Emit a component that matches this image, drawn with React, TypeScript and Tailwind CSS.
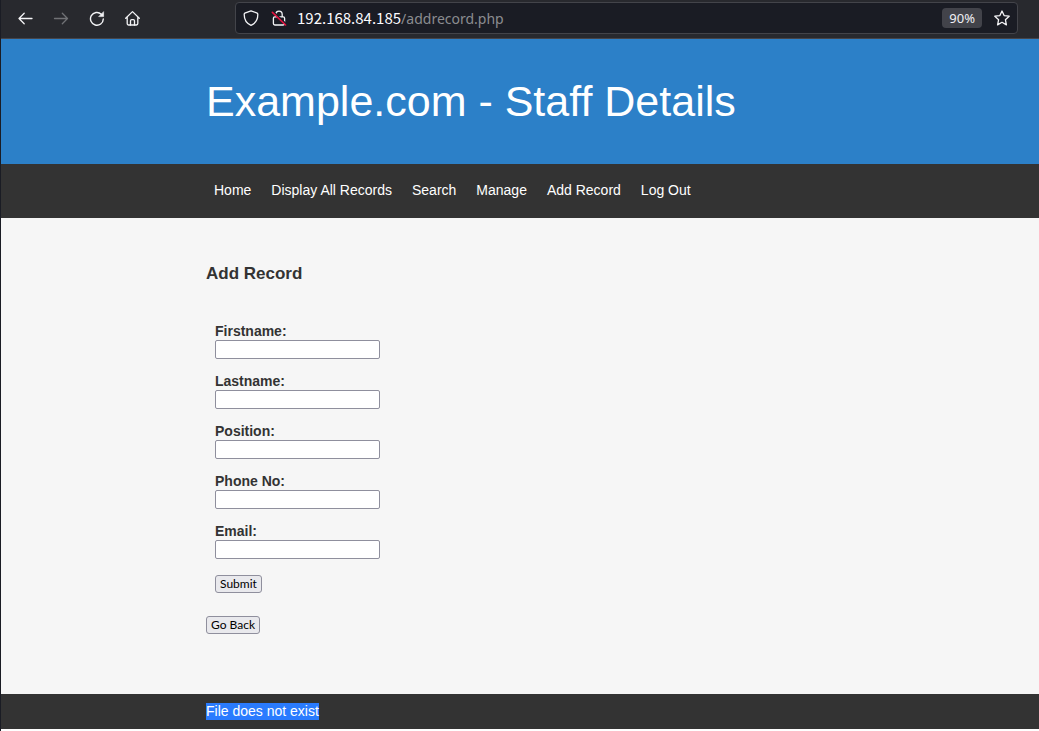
import React from 'react';

interface NavItem {
  label: string;
  href: string;
}

interface Field {
  id: string;
  label: string;
  type: string;
}

const navItems: NavItem[] = [
  { label: 'Home', href: '#index' },
  { label: 'Display All Records', href: '#display' },
  { label: 'Search', href: '#search' },
  { label: 'Manage', href: '#manage' },
  { label: 'Add Record', href: '#addrecord' },
  { label: 'Log Out', href: '#logout' },
];

const fields: Field[] = [
  { id: 'firstname', label: 'Firstname:', type: 'text' },
  { id: 'lastname', label: 'Lastname:', type: 'text' },
  { id: 'position', label: 'Position:', type: 'text' },
  { id: 'phone', label: 'Phone No:', type: 'text' },
  { id: 'email', label: 'Email:', type: 'text' },
];

const strokeProps = {
  width: 16,
  height: 16,
  viewBox: '0 0 16 16',
  fill: 'none',
  stroke: 'currentColor',
  strokeWidth: 1.3,
  strokeLinecap: 'round' as const,
  strokeLinejoin: 'round' as const,
};

const BackIcon = () => (
  <svg {...strokeProps}>
    <path d="M15 8.5H2M7.2 3.3L2 8.5L7.2 13.7" />
  </svg>
);

const ForwardIcon = () => (
  <svg {...strokeProps}>
    <path d="M1.5 8.5H14.5M9.3 3.3L14.5 8.5L9.3 13.7" />
  </svg>
);

const ReloadIcon = () => (
  <svg {...strokeProps}>
    <path d="M14.3 9A6.4 6.4 0 1 1 12.3 4.2" strokeWidth="1.4" />
    <path d="M14.6 2V6.6H10Z" fill="currentColor" strokeWidth="0.6" />
  </svg>
);

const HomeIcon = () => (
  <svg {...strokeProps}>
    <path d="M.7 8.2L7.5 1.6L14.3 8.2M2.2 7V13.6A1.4 1.4 0 0 0 3.6 15H11.4A1.4 1.4 0 0 0 12.8 13.6V7" />
    <path d="M5.5 15V10.8A1.2 1.2 0 0 1 6.7 9.6H8.3A1.2 1.2 0 0 1 9.5 10.8V15" />
  </svg>
);

const ShieldIcon = () => (
  <svg {...strokeProps}>
    <path d="M8 .8L14.2 3.1C14.9 3.4 14.8 4 14.8 4.6C14.8 10 12.2 13.6 8 15.4C3.8 13.6 1.2 10 1.2 4.6C1.2 4 1.1 3.4 1.8 3.1Z" />
  </svg>
);

const InsecureIcon = () => (
  <svg {...strokeProps}>
    <path d="M4.8 6.8V4.4A3.2 3.2 0 0 1 11.2 4.4V6.8M3.8 6.8H12.2A1.4 1.4 0 0 1 13.6 8.2V13.6A1.4 1.4 0 0 1 12.2 15H3.8A1.4 1.4 0 0 1 2.4 13.6V8.2A1.4 1.4 0 0 1 3.8 6.8Z" />
    <path d="M2.6 2.2L15.4 14.2" stroke="#1a1c24" strokeWidth="1.6" />
    <path d="M1.4 2.4L14.6 15" stroke="#e2123f" strokeWidth="1.6" />
  </svg>
);

const StarIcon = () => (
  <svg {...strokeProps}>
    <path d="M8 1L10.1 5.6L15.2 6.2L11.4 9.7L12.4 14.9L8 12.3L3.6 14.9L4.6 9.7L.8 6.2L5.9 5.6Z" />
  </svg>
);

const Toolbar: React.FC = () => (
  <div className="flex items-center border-b border-[#45454b] bg-[#28292e] pt-0.5 pb-1 pl-4 pr-[21px] text-[#f4f4f6]">
    <div className="flex shrink-0 items-center gap-5">
      <button type="button" aria-label="Back"><BackIcon /></button>
      <button type="button" aria-label="Forward" className="text-[#707175]"><ForwardIcon /></button>
      <button type="button" aria-label="Reload"><ReloadIcon /></button>
      <button type="button" aria-label="Home"><HomeIcon /></button>
    </div>
    <div className="ml-[94px] flex h-8 min-w-0 flex-1 items-center rounded border border-[#43444a] bg-[#1a1c24] px-[7px] font-['Noto_Sans',sans-serif]">
      <button type="button" aria-label="Tracking protection"><ShieldIcon /></button>
      <button type="button" aria-label="Connection not secure" className="ml-3"><InsecureIcon /></button>
      <a href="#addrecord" className="ml-2.5 flex-1 truncate text-sm text-[#8b8c90]">
        <span className="font-['Noto_Sans_CJK_SC','Noto_Sans',sans-serif] text-[15px] text-[#fbfbfe]">192.168.84.185</span>/addrecord.php
      </a>
      <button type="button" className="h-5 rounded-sm bg-[#42434a] px-[7px] text-[13px] leading-5 text-[#f0f0f4]">90%</button>
      <button type="button" aria-label="Bookmark this page" className="ml-3"><StarIcon /></button>
    </div>
  </div>
);

const Container: React.FC<{ children: React.ReactNode }> = ({ children }) => (
  <div className="mx-auto w-full max-w-[628px]">{children}</div>
);

const buttonClass =
  "h-[18px] rounded-[3px] border border-[#8f8f9d] bg-[#e9e9ed] px-1 font-[Lato,'Noto_Sans',sans-serif] text-xs leading-4 text-black";

const App: React.FC = () => (
  <div className="flex min-h-screen flex-col border-l border-[#1a1c24] bg-white font-['Liberation_Sans',Arial,sans-serif] text-sm text-[#333333]">
    <Toolbar />
    <header className="bg-[#2c80c8] py-[38px] text-white">
      <Container>
        <h1 className="text-[43px] leading-[49px]">Example.com - Staff Details</h1>
      </Container>
    </header>
    <nav className="bg-[#333333] pt-[15px] pb-[17px] text-white">
      <Container>
        <ul className="flex gap-5 px-2 leading-[22px]">
          {navItems.map((item) => (
            <li key={item.label}>
              <a href={item.href}>{item.label}</a>
            </li>
          ))}
        </ul>
      </Container>
    </nav>
    <main className="flex-1 bg-[#f6f6f6] pt-[45px] pb-[60px]">
      <Container>
        <h2 className="text-[17px] leading-[22px] font-bold">Add Record</h2>
        <form className="mt-[38px] px-[9px]" onSubmit={(e) => e.preventDefault()}>
          {fields.map((field) => (
            <div key={field.id} className="mb-3.5 flex flex-col items-start">
              <label htmlFor={field.id} className="leading-[17px] font-bold">{field.label}</label>
              <input
                id={field.id}
                name={field.id}
                type={field.type}
                className="h-[19px] w-[165px] rounded-xs border border-[#8f8f9d] bg-white px-1 text-xs text-black"
              />
            </div>
          ))}
          <button type="submit" className={buttonClass}>Submit</button>
        </form>
        <button type="button" className={`mt-[23px] block ${buttonClass}`}>Go Back</button>
      </Container>
    </main>
    <footer className="mb-0.5 bg-[#333333] py-[9px] text-white">
      <Container>
        <p className="leading-[17px]">
          <mark className="inline-block bg-[#2a7bff] text-white">File does not exist</mark>
        </p>
      </Container>
    </footer>
  </div>
);

export default App;
